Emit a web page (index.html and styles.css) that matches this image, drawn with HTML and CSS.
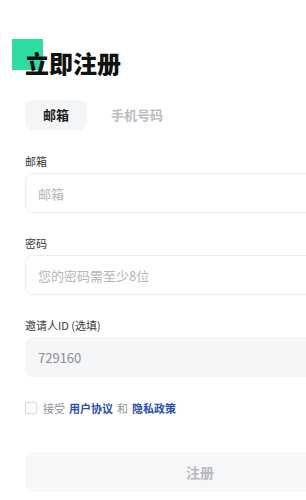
FILE: index.html
```html
<!DOCTYPE html>
<html lang="zh-CN">
<head>
  <meta charset="UTF-8">
  <meta name="viewport" content="width=device-width, initial-scale=1.0">
  <title>立即注册</title>
  <link rel="stylesheet" href="styles.css">
</head>
<body>
  <div class="register">
    <div class="logo-mark"></div>
    <h1 class="title">立即注册</h1>

    <div class="tabs">
      <div class="tab active">邮箱</div>
      <div class="tab">手机号码</div>
    </div>

    <div class="field">
      <label class="field-label">邮箱</label>
      <input class="field-input" type="text" placeholder="邮箱">
    </div>

    <div class="field">
      <label class="field-label">密码</label>
      <input class="field-input" type="password" placeholder="您的密码需至少8位">
    </div>

    <div class="field">
      <label class="field-label">邀请人ID (选填)</label>
      <input class="field-input filled" type="text" value="729160">
    </div>

    <div class="agree">
      <div class="checkbox"></div>
      <span class="agree-text">接受</span>
      <a class="agree-link" href="#">用户协议</a>
      <span class="agree-text">和</span>
      <a class="agree-link" href="#">隐私政策</a>
    </div>

    <button class="submit">注册</button>
  </div>
</body>
</html>
```

FILE: styles.css
```css
body {
  margin: 0;
  background: #fff;
  font-family: "Noto Sans CJK SC", "Noto Sans", sans-serif;
  color: #222;
  overflow: hidden;
}

.register {
  position: relative;
  width: 350px;
  padding: 47px 0 0 25px;
}

.logo-mark {
  position: absolute;
  left: 12px;
  top: 39px;
  width: 31px;
  height: 31px;
  background: #2fdca2;
}

.title {
  position: relative;
  margin: 0;
  font-size: 24px;
  line-height: 32px;
  font-weight: 900;
  color: #111;
}

.tabs {
  display: flex;
  gap: 6px;
  margin-top: 21px;
}

.tab {
  height: 30px;
  line-height: 30px;
  padding: 0 18px;
  border-radius: 8px;
  font-size: 13px;
  font-weight: 700;
  color: #b9bcc3;
}

.tab.active {
  background: #f4f5f7;
  color: #1c1c1e;
}

.field {
  display: flex;
  flex-direction: column;
  gap: 4px;
  margin-top: 23px;
}

.field + .field {
  margin-top: 22px;
}

.field-label {
  font-size: 11px;
  line-height: 16px;
  color: #3a3a3c;
}

.field-input {
  box-sizing: border-box;
  height: 40px;
  padding: 0 12px;
  border: 1px solid #eceef1;
  border-radius: 8px;
  font-family: inherit;
  font-size: 13px;
  color: #333;
  outline: none;
}

.field-input::placeholder {
  color: #b3b6bb;
}

.field-input.filled {
  background: #f5f6f8;
  border-color: #f5f6f8;
  color: #8b8e94;
}

.agree {
  display: flex;
  align-items: center;
  gap: 4px;
  height: 16px;
  margin-top: 23px;
  font-size: 11px;
}

.checkbox {
  box-sizing: border-box;
  width: 12px;
  height: 12px;
  margin-right: 2px;
  border: 1px solid #d6d8dc;
  border-radius: 2px;
}

.agree-text {
  color: #8e9196;
}

.agree-link {
  color: #2b4fae;
  font-weight: 700;
  text-decoration: none;
}

.submit {
  display: block;
  width: 100%;
  height: 40px;
  margin-top: 36px;
  border: none;
  border-radius: 8px;
  background: #f6f7f9;
  font-family: inherit;
  font-size: 14px;
  font-weight: 700;
  color: #b6b9bf;
}
```
